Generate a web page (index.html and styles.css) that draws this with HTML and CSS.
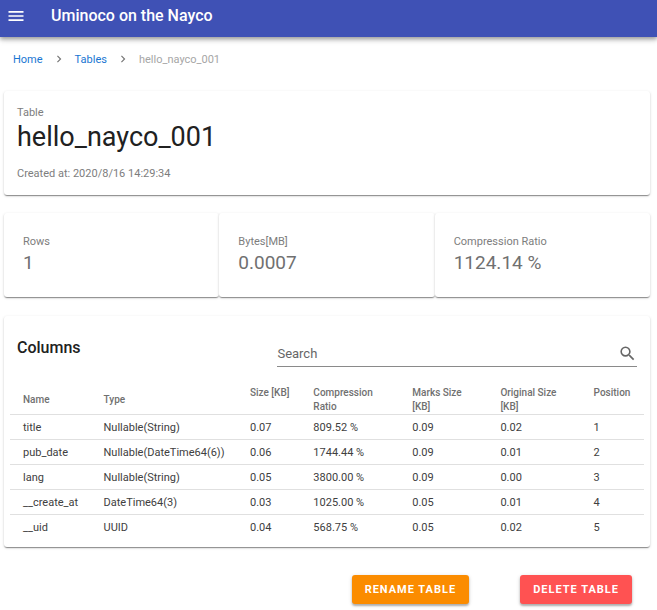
FILE: index.html
```html
<!DOCTYPE html>
<html lang="en">
<head>
<meta charset="utf-8">
<meta name="viewport" content="width=device-width, initial-scale=1">
<title>Uminoco on the Nayco</title>
<link rel="stylesheet" href="styles.css">
</head>
<body>
<header class="app-bar">
  <button class="menu-button" type="button" aria-label="Menu">
    <svg viewBox="0 0 24 24" width="20" height="20"><path d="M3 6h18v2H3V6m0 5h18v2H3v-2m0 5h18v2H3v-2z"/></svg>
  </button>
  <h1 class="app-title">Uminoco on the Nayco</h1>
</header>
<main>
  <nav class="breadcrumbs">
    <a href="#">Home</a>
    <svg class="chevron" viewBox="0 0 24 24" width="14" height="14"><path d="M8.6 16.6 13.2 12 8.6 7.4 10 6l6 6-6 6z"/></svg>
    <a href="#">Tables</a>
    <svg class="chevron" viewBox="0 0 24 24" width="14" height="14"><path d="M8.6 16.6 13.2 12 8.6 7.4 10 6l6 6-6 6z"/></svg>
    <span class="current">hello_nayco_001</span>
  </nav>
  <section class="card summary">
    <p class="overline">Table</p>
    <h2 class="table-name">hello_nayco_001</h2>
    <p class="created">Created at: 2020/8/16 14:29:34</p>
  </section>
  <section class="stats">
    <div class="card stat"><p class="stat-label">Rows</p><p class="stat-value">1</p></div>
    <div class="card stat"><p class="stat-label">Bytes[MB]</p><p class="stat-value">0.0007</p></div>
    <div class="card stat"><p class="stat-label">Compression Ratio</p><p class="stat-value">1124.14 %</p></div>
  </section>
  <section class="card columns">
    <div class="columns-head">
      <h2 class="columns-title">Columns</h2>
      <div class="search">
        <input type="text" placeholder="Search" aria-label="Search">
        <svg viewBox="0 0 24 24" width="19" height="19"><path d="M9.5 3A6.5 6.5 0 0 1 16 9.5c0 1.61-.59 3.09-1.56 4.23l.27.27h.79l5 5-1.5 1.5-5-5v-.79l-.27-.27A6.516 6.516 0 0 1 9.5 16a6.5 6.5 0 0 1 0-13m0 2C7 5 5 7 5 9.5S7 14 9.5 14 14 12 14 9.5 12 5 9.5 5z"/></svg>
      </div>
    </div>
    <table>
      <colgroup><col class="c-name"><col class="c-type"><col class="c-size"><col class="c-ratio"><col class="c-marks"><col class="c-orig"><col class="c-pos"></colgroup>
      <thead><tr><th>Name</th><th>Type</th><th class="top">Size [KB]</th><th>Compression Ratio</th><th>Marks Size [KB]</th><th>Original Size [KB]</th><th class="top">Position</th></tr></thead>
      <tbody>
        <tr><td>title</td><td>Nullable(String)</td><td>0.07</td><td>809.52 %</td><td>0.09</td><td>0.02</td><td>1</td></tr>
        <tr><td>pub_date</td><td>Nullable(DateTime64(6))</td><td>0.06</td><td>1744.44 %</td><td>0.09</td><td>0.01</td><td>2</td></tr>
        <tr><td>lang</td><td>Nullable(String)</td><td>0.05</td><td>3800.00 %</td><td>0.09</td><td>0.00</td><td>3</td></tr>
        <tr><td>__create_at</td><td>DateTime64(3)</td><td>0.03</td><td>1025.00 %</td><td>0.05</td><td>0.01</td><td>4</td></tr>
        <tr><td>__uid</td><td>UUID</td><td>0.04</td><td>568.75 %</td><td>0.05</td><td>0.02</td><td>5</td></tr>
      </tbody>
    </table>
  </section>
  <div class="actions">
    <button class="action rename" type="button">RENAME TABLE</button>
    <button class="action delete" type="button">DELETE TABLE</button>
  </div>
</main>
</body>
</html>
```
FILE: styles.css
```css
* { box-sizing: border-box; }
body { margin: 0; background: #fff; color: #212121; font-family: Roboto, "Liberation Sans", sans-serif; font-size: 11px; }
h1, h2, p { margin: 0; font-weight: 400; }
.app-bar { display: flex; align-items: center; gap: 25px; height: 37px; padding: 0 6px 6px; background: #3f51b5; color: #fff; box-shadow: 0 2px 4px rgba(0,0,0,.3), 0 3px 6px rgba(0,0,0,.15); }
.menu-button { display: flex; padding: 0; border: 0; background: none; color: inherit; }
svg { display: block; fill: currentColor; }
.app-title { font-size: 16px; font-weight: 500; line-height: 24px; }
main { padding: 0 7px 0 4px; }
.breadcrumbs { display: flex; align-items: center; gap: 9px; height: 44px; padding: 0 9px; font-size: 11px; }
.breadcrumbs a { color: #1976d2; text-decoration: none; }
.breadcrumbs .current { color: #a6a6a6; }
.chevron { color: #757575; }
.card { background: #fff; border-radius: 3px; box-shadow: 0 2px 1px -1px rgba(0,0,0,.25), 0 1px 1px rgba(0,0,0,.18), 0 1px 3px rgba(0,0,0,.16); }
.summary { margin-top: 10px; padding: 14px 13px 13px; }
.overline, .created, .stat-label { color: #7d7d7d; line-height: 16px; }
.table-name { font-size: 27px; line-height: 32px; }
.created { margin-top: 13px; }
.stats { display: grid; grid-template-columns: repeat(3, 1fr); margin-top: 18px; }
.stat { padding: 21px 19px 21px; }
.stat-value { font-size: 19px; line-height: 26px; color: #707070; }
.columns { margin-top: 19px; padding: 16px 6px 7px; }
.columns-head { display: flex; justify-content: space-between; padding: 0 7px; }
.columns-title { font-size: 16px; font-weight: 500; line-height: 32px; }
.search { display: flex; align-items: center; width: 58%; height: 35px; padding-top: 8px; border-bottom: 1px solid #8a8a8a; color: #666; }
.search input { flex: 1; min-width: 0; padding: 0; border: 0; outline: 0; background: none; font: 13px Roboto, sans-serif; }
.search input::placeholder { color: #666; opacity: 1; }
table { width: 100%; margin-top: 19px; border-collapse: collapse; table-layout: fixed; }
th, td { padding: 0 0 0 13px; text-align: left; }
th { height: 28px; padding-right: 10px; color: #707070; font-size: 10px; font-weight: 500; line-height: 14px; }
th.top { padding-right: 0; vertical-align: top; }
td { height: 25px; padding-top: 1px; border-top: 1px solid #e0e0e0; color: #404040; line-height: 23px; }
.c-name { width: 12.7%; } .c-type { width: 23.1%; } .c-size { width: 10%; } .c-ratio { width: 15.6%; } .c-marks { width: 13.9%; } .c-orig { width: 14.7%; }
.actions { display: flex; justify-content: flex-end; gap: 51px; padding: 28px 18px 6px; }
.action { height: 29px; padding: 0 13px; border: 0; border-radius: 3px; color: #fff; font: 700 11px Roboto, sans-serif; letter-spacing: 1px; box-shadow: 0 2px 2px rgba(0,0,0,.25), 0 1px 4px rgba(0,0,0,.15); }
.rename { background: #fb8c00; }
.delete { background: #ff5252; }
```
